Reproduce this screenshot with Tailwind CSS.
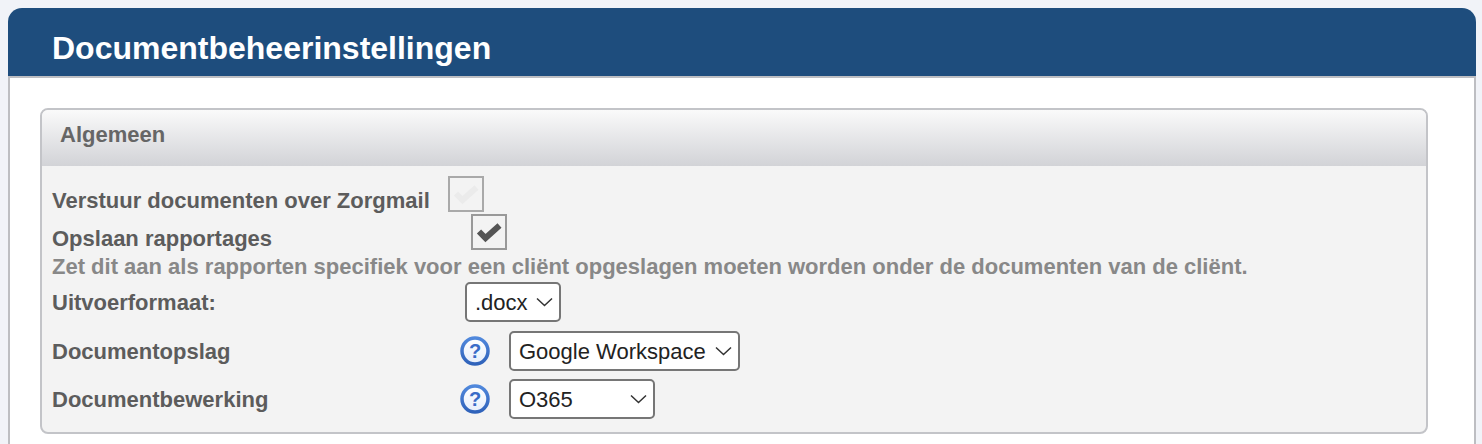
<!DOCTYPE html>
<html lang="nl">
<head>
<meta charset="utf-8">
<script src="https://cdn.jsdelivr.net/npm/@tailwindcss/browser@4"></script>
</head>
<body class="bg-[#f1f3f8] font-['Liberation_Sans',Arial,sans-serif] overflow-hidden">
<svg width="0" height="0" class="absolute"><defs>
  <linearGradient id="ring" x1="0" y1="0" x2="0" y2="1"><stop offset="0" stop-color="#5088dc"/><stop offset="1" stop-color="#2f62ba"/></linearGradient>
  <linearGradient id="inner" x1="0" y1="0" x2="0" y2="1"><stop offset="0" stop-color="#ffffff"/><stop offset="1" stop-color="#e6eefb"/></linearGradient>
</defs></svg>
<div class="pt-2 pl-2 pr-[6px] h-[444px] overflow-hidden">
  <div class="h-[68px] bg-[#1e4d7d] rounded-t-[14px] pl-[44px] pt-[24px]">
    <h1 class="text-[32px] leading-[32px] font-bold text-white">Documentbeheerinstellingen</h1>
  </div>
  <div class="bg-white border-x-2 border-t-2 border-[#bdbec2] pt-[30px] pl-[30px] pr-[46px] h-[400px]">
    <div class="h-[326px] rounded-[8px] border-2 border-[#c3c4c8] bg-[#f3f3f3] overflow-hidden">
      <div class="h-[56px] bg-linear-to-b from-[#fafafa] to-[#d2d3d7] pl-[18px] pt-[13px] text-[22px] leading-[24px] font-bold text-[#666666]">Algemeen</div>
      <div class="pl-[10px] pt-[10px] text-[22px] font-bold text-[#5c5c5c]">
        <div class="flex h-[36px]">
          <span class="mt-[12px] leading-[26px]">Verstuur documenten over Zorgmail</span>
          <span class="ml-[18px] w-[36px] h-[36px] border-2 border-[#a9a9a9] flex items-center justify-center">
            <svg width="26" height="22" viewBox="0 0 26 22"><path d="M3 10.5 L9.5 17 L23.5 4.5" fill="none" stroke="#ebebeb" stroke-width="6"/></svg>
          </span>
        </div>
        <div class="flex h-[36px] mt-[2px]">
          <span class="w-[419px] mt-[12px] leading-[26px]">Opslaan rapportages</span>
          <span class="w-[36px] h-[36px] border-2 border-[#999999] flex items-center justify-center">
            <svg width="26" height="22" viewBox="0 0 26 22"><path d="M3 10.5 L9.5 17 L23.5 4.5" fill="none" stroke="#555555" stroke-width="6"/></svg>
          </span>
        </div>
        <p class="h-[32px] leading-[34px] text-[#888888] whitespace-nowrap">Zet dit aan als rapporten specifiek voor een cliënt opgeslagen moeten worden onder de documenten van de cliënt.</p>
        <div class="flex items-center h-[40px]">
          <label class="w-[413px]">Uitvoerformaat:</label>
          <div class="relative w-[96px] h-[40px]">
            <select class="appearance-none w-full h-full bg-white border-2 border-[#767676] rounded-[5px] pl-[8px] text-[22px] font-normal text-[#222222]"><option>.docx</option></select>
            <svg class="absolute right-[8px] top-[15px] pointer-events-none" width="17" height="10" viewBox="0 0 17 10"><path d="M1 1.5 L8.5 8.5 L16 1.5" fill="none" stroke="#333333" stroke-width="1.5"/></svg>
          </div>
        </div>
        <div class="flex items-center h-[40px] mt-[9px]">
          <label class="w-[408px]">Documentopslag</label>
          <svg width="30" height="30" viewBox="0 0 30 30"><circle cx="15" cy="15" r="13" fill="url(#inner)" stroke="url(#ring)" stroke-width="3.5"/><text x="15" y="22" text-anchor="middle" font-size="20" font-weight="700" fill="#3a6cc8" font-family="Liberation Sans">?</text></svg>
          <div class="relative ml-[19px] w-[231px] h-[40px]">
            <select class="appearance-none w-full h-full bg-white border-2 border-[#767676] rounded-[5px] pl-[8px] text-[22px] font-normal text-[#222222]"><option>Google Workspace</option></select>
            <svg class="absolute right-[8px] top-[15px] pointer-events-none" width="17" height="10" viewBox="0 0 17 10"><path d="M1 1.5 L8.5 8.5 L16 1.5" fill="none" stroke="#333333" stroke-width="1.5"/></svg>
          </div>
        </div>
        <div class="flex items-center h-[40px] mt-[8px]">
          <label class="w-[408px] pt-[1px]">Documentbewerking</label>
          <svg width="30" height="30" viewBox="0 0 30 30"><circle cx="15" cy="15" r="13" fill="url(#inner)" stroke="url(#ring)" stroke-width="3.5"/><text x="15" y="22" text-anchor="middle" font-size="20" font-weight="700" fill="#3a6cc8" font-family="Liberation Sans">?</text></svg>
          <div class="relative ml-[19px] w-[146px] h-[40px]">
            <select class="appearance-none w-full h-full bg-white border-2 border-[#767676] rounded-[5px] pl-[8px] text-[22px] font-normal text-[#222222]"><option>O365</option></select>
            <svg class="absolute right-[8px] top-[15px] pointer-events-none" width="17" height="10" viewBox="0 0 17 10"><path d="M1 1.5 L8.5 8.5 L16 1.5" fill="none" stroke="#333333" stroke-width="1.5"/></svg>
          </div>
        </div>
      </div>
    </div>
  </div>
</div>
</body>
</html>
